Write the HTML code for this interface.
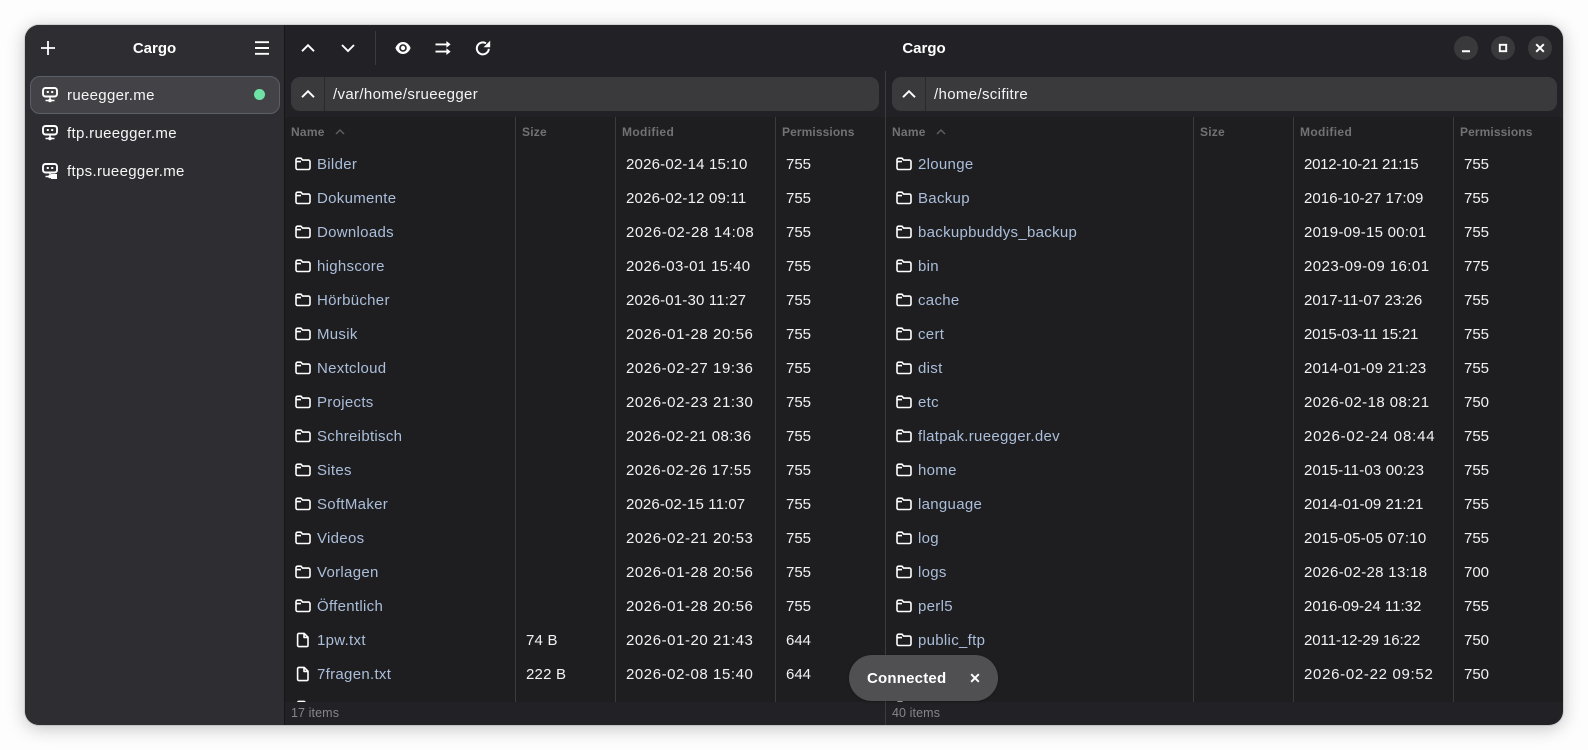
<!DOCTYPE html>
<html><head><meta charset="utf-8"><title>Cargo</title>
<style>
html,body{margin:0;padding:0;width:1588px;height:750px;background:#fdfdfd;overflow:hidden}
body{font-family:"Liberation Sans",sans-serif;font-size:15px;color:#fff}
#w{position:absolute;left:25px;top:25px;width:1538px;height:700px;border-radius:14px;overflow:hidden;background:#222226;box-shadow:0 3px 18px rgba(0,0,0,.24),0 0 0 1px rgba(0,0,0,.1)}
.a{position:absolute}
#side{left:0;top:0;width:259px;height:700px;background:#2e2e32}
.t{font-weight:bold;font-size:15px;line-height:20px;text-align:center}
.it{position:absolute;left:42px;line-height:20px;letter-spacing:.32px;color:#f6f6f7}
.pb{position:absolute;top:52px;height:34px;background:#3a3a3d;border-radius:9px;}
.pb i{position:absolute;left:33px;top:0;width:1px;height:34px;background:#29292c}
.pb span{position:absolute;left:42px;top:1px;line-height:33px;letter-spacing:.35px;color:#f4f4f5}
.list{position:absolute;top:92px;height:585px;background:#1e1e20;overflow:hidden}
.sep{position:absolute;top:0;width:1px;height:585px;background:#3b3b3e}
.h{position:absolute;top:7px;font-size:12px;font-weight:bold;line-height:16px;color:#727275}
.r{position:absolute;left:0;width:100%;height:34px;line-height:34px}
.r span{position:absolute;top:1px;white-space:nowrap}
.r svg{position:absolute;top:9px}
.n{color:#abbeda;letter-spacing:.3px}
.s{color:#f2f2f3;letter-spacing:.2px}
.d{color:#f2f2f3}
.p{color:#f2f2f3}
#L .r span.n{left:32px}#L .r span.s{left:241px}#L .r span.d{left:341px}#L .r span.p{left:501px}
#L .r svg{left:10px}
#R .r span.n{left:32px}#R .r span.s{left:311px}#R .r span.d{left:418px}#R .r span.p{left:578px}
#R .r svg{left:10px}
.ft{position:absolute;top:677px;height:23px;font-size:12.5px;line-height:23px;color:#86868a;letter-spacing:.1px}
.wb{position:absolute;top:11px;width:24px;height:24px;border-radius:50%;background:#39393c}
</style></head>
<body>
<svg width="0" height="0" style="position:absolute"><defs>
<symbol id="fo" viewBox="0 0 16 16"><path d="M2.6 2.2H6l1.6 1.9h5.8c.9 0 1.6.7 1.6 1.6v6.2c0 .9-.7 1.6-1.6 1.6H2.6c-.9 0-1.6-.7-1.6-1.6V3.8c0-.9.7-1.6 1.6-1.6zM1 5.6h5" fill="none" stroke="#fff" stroke-width="1.6" stroke-linejoin="round"/></symbol>
<symbol id="fi" viewBox="0 0 16 16"><path d="M4 1.4h5.2L13 5.2v8c0 .8-.6 1.4-1.4 1.4H4c-.8 0-1.4-.6-1.4-1.4V2.8C2.6 2 3.2 1.4 4 1.4zM9 1.6v3.8h3.8" fill="none" stroke="#fff" stroke-width="1.6" stroke-linejoin="round"/></symbol>
<symbol id="sv" viewBox="0 0 16 16"><path d="M3.6 1H12.4C14 1 15 2 15 3.6V6.9C15 8.5 14 9.5 12.4 9.5H3.6C2 9.5 1 8.5 1 6.9V3.6C1 2 2 1 3.6 1Z" fill="none" stroke="#fff" stroke-width="1.9"/><path d="M4.8 4h2v2h-2zM9.2 4h2v2h-2z" fill="#fff"/><path d="M8 9.5v3M3.5 13.5h9" stroke="#fff" stroke-width="1.4"/><circle cx="8" cy="13.5" r="1.8" fill="#fff"/></symbol>
</defs></svg>
<div id="w">
<div id="side" class="a">
<svg class="a" style="left:15px;top:15px" width="16" height="16"><path d="M8 1v14M1 8h14" stroke="#fff" stroke-width="1.8"/></svg>
<div class="a t" style="left:0;width:259px;top:14px">Cargo</div>
<svg class="a" style="left:229px;top:15px" width="16" height="16"><path d="M1 2.2h14M1 8h14M1 13.8h14" stroke="#fff" stroke-width="1.9"/></svg>
<div class="a" style="left:5px;top:51px;width:248px;height:36px;background:#434347;border:1px solid #5b5f69;border-radius:10px"></div>
<svg class="a" style="left:17px;top:62px" width="16" height="16"><use href="#sv"/></svg>
<div class="it" style="top:61px">rueegger.me</div>
<div class="a" style="left:229px;top:64px;width:11px;height:11px;border-radius:50%;background:#6fe3a5"></div>
<svg class="a" style="left:17px;top:100px" width="16" height="16"><use href="#sv"/></svg>
<div class="it" style="top:99px">ftp.rueegger.me</div>
<svg class="a" style="left:17px;top:138px" width="16" height="16"><use href="#sv"/><rect x="9" y="11" width="6" height="5" fill="#fff"/></svg>
<div class="it" style="top:137px">ftps.rueegger.me</div>
</div>
<div class="a" style="left:259px;top:0;width:1px;height:700px;background:#161618"></div>

<svg class="a" style="left:275px;top:15px" width="16" height="16"><path d="M2 11.2 8 5.2l6 6" fill="none" stroke="#fff" stroke-width="1.9"/></svg>
<svg class="a" style="left:315px;top:15px" width="16" height="16"><path d="M2 5 8 11l6-6" fill="none" stroke="#fff" stroke-width="1.9"/></svg>
<div class="a" style="left:350px;top:6px;width:1px;height:34px;background:#3b3b3e"></div>
<svg class="a" style="left:370px;top:15px" width="16" height="16"><path d="M8 2C4 2 1.400 5.300.4 8c1 2.700 3.600 6 7.600 6s6.600-3.300 7.600-6C14.600 5.300 12 2 8 2z" fill="#fff"/><circle cx="8" cy="8" r="3.800" fill="#222226"/><circle cx="8" cy="8" r="2.200" fill="#fff"/></svg>
<svg class="a" style="left:410px;top:15px" width="16" height="16"><path d="M.5 4.400h13M.5 11.600h13" stroke="#fff" stroke-width="1.900"/><path d="M11.400 1 15.600 4.400 11.400 7.800zM11.400 8.200l4.200 3.400-4.200 3.400z" fill="#fff"/></svg>
<svg class="a" style="left:450px;top:15px" width="16" height="16"><path d="M13.800 8.800A6 6 0 1 1 11 3.300" fill="none" stroke="#fff" stroke-width="2"/><path d="M15.200.6v6.600H8.600z" fill="#fff"/></svg>
<div class="a t" style="left:260px;width:1278px;top:14px">Cargo</div>
<div class="wb" style="left:1429px"><svg class="a" style="left:4px;top:4px" width="16" height="16"><path d="M4 11.200h8" stroke="#fff" stroke-width="2"/></svg></div>
<div class="wb" style="left:1466px"><svg class="a" style="left:4px;top:4px" width="16" height="16"><rect x="4.800" y="4.800" width="6.400" height="6.400" fill="none" stroke="#fff" stroke-width="1.900"/></svg></div>
<div class="wb" style="left:1503px"><svg class="a" style="left:4px;top:4px" width="16" height="16"><path d="M4.200 4.200l7.600 7.600M11.800 4.200l-7.600 7.600" stroke="#fff" stroke-width="2"/></svg></div>

<div class="pb" style="left:266px;width:588px"><svg class="a" style="left:9px;top:9px" width="16" height="16"><path d="M2 11.200 8 5.200l6 6" fill="none" stroke="#fff" stroke-width="1.900"/></svg><i></i><span>/var/home/srueegger</span></div>
<div class="pb" style="left:867px;width:665px"><svg class="a" style="left:9px;top:9px" width="16" height="16"><path d="M2 11.200 8 5.200l6 6" fill="none" stroke="#fff" stroke-width="1.900"/></svg><i></i><span>/home/scifitre</span></div>

<div id="L" class="list" style="left:260px;width:600px">
<div class="sep" style="left:230px"></div><div class="sep" style="left:330px"></div><div class="sep" style="left:490px"></div>
<div class="h" style="left:6px;letter-spacing:.25px">Name</div>
<svg class="a" style="left:50px;top:10px" width="10" height="10"><path d="M1 7 5 3l4 4" fill="none" stroke="#5d5d60" stroke-width="1.500"/></svg>
<div class="h" style="left:237px;letter-spacing:.2px">Size</div><div class="h" style="left:337px;letter-spacing:.35px">Modified</div><div class="h" style="left:497px;letter-spacing:.1px">Permissions</div>
<div class="r" style="top:30px"><svg width="16" height="16"><use href="#fo"/></svg><span class="n">Bilder</span><span class="d" style="letter-spacing:.19px">2026-02-14 15:10</span><span class="p">755</span></div>
<div class="r" style="top:64px"><svg width="16" height="16"><use href="#fo"/></svg><span class="n">Dokumente</span><span class="d" style="letter-spacing:.19px">2026-02-12 09:11</span><span class="p">755</span></div>
<div class="r" style="top:98px"><svg width="16" height="16"><use href="#fo"/></svg><span class="n">Downloads</span><span class="d" style="letter-spacing:.62px">2026-02-28 14:08</span><span class="p">755</span></div>
<div class="r" style="top:132px"><svg width="16" height="16"><use href="#fo"/></svg><span class="n">highscore</span><span class="d" style="letter-spacing:.38px">2026-03-01 15:40</span><span class="p">755</span></div>
<div class="r" style="top:166px"><svg width="16" height="16"><use href="#fo"/></svg><span class="n">Hörbücher</span><span class="d" style="letter-spacing:.18px">2026-01-30 11:27</span><span class="p">755</span></div>
<div class="r" style="top:200px"><svg width="16" height="16"><use href="#fo"/></svg><span class="n">Musik</span><span class="d" style="letter-spacing:.56px">2026-01-28 20:56</span><span class="p">755</span></div>
<div class="r" style="top:234px"><svg width="16" height="16"><use href="#fo"/></svg><span class="n">Nextcloud</span><span class="d" style="letter-spacing:.56px">2026-02-27 19:36</span><span class="p">755</span></div>
<div class="r" style="top:268px"><svg width="16" height="16"><use href="#fo"/></svg><span class="n">Projects</span><span class="d" style="letter-spacing:.56px">2026-02-23 21:30</span><span class="p">755</span></div>
<div class="r" style="top:302px"><svg width="16" height="16"><use href="#fo"/></svg><span class="n">Schreibtisch</span><span class="d" style="letter-spacing:.44px">2026-02-21 08:36</span><span class="p">755</span></div>
<div class="r" style="top:336px"><svg width="16" height="16"><use href="#fo"/></svg><span class="n">Sites</span><span class="d" style="letter-spacing:.44px">2026-02-26 17:55</span><span class="p">755</span></div>
<div class="r" style="top:370px"><svg width="16" height="16"><use href="#fo"/></svg><span class="n">SoftMaker</span><span class="d" style="letter-spacing:.12px">2026-02-15 11:07</span><span class="p">755</span></div>
<div class="r" style="top:404px"><svg width="16" height="16"><use href="#fo"/></svg><span class="n">Videos</span><span class="d" style="letter-spacing:.56px">2026-02-21 20:53</span><span class="p">755</span></div>
<div class="r" style="top:438px"><svg width="16" height="16"><use href="#fo"/></svg><span class="n">Vorlagen</span><span class="d" style="letter-spacing:.56px">2026-01-28 20:56</span><span class="p">755</span></div>
<div class="r" style="top:472px"><svg width="16" height="16"><use href="#fo"/></svg><span class="n">Öffentlich</span><span class="d" style="letter-spacing:.56px">2026-01-28 20:56</span><span class="p">755</span></div>
<div class="r" style="top:506px"><svg width="16" height="16"><use href="#fi"/></svg><span class="n">1pw.txt</span><span class="s">74 B</span><span class="d" style="letter-spacing:.56px">2026-01-20 21:43</span><span class="p">644</span></div>
<div class="r" style="top:540px"><svg width="16" height="16"><use href="#fi"/></svg><span class="n">7fragen.txt</span><span class="s">222 B</span><span class="d" style="letter-spacing:.56px">2026-02-08 15:40</span><span class="p">644</span></div>
<div class="r" style="top:574px"><svg width="16" height="16"><use href="#fi"/></svg></div>
</div>

<div id="R" class="list" style="left:861px;width:677px">
<div class="sep" style="left:307px"></div><div class="sep" style="left:407px"></div><div class="sep" style="left:567px"></div>
<div class="h" style="left:6px;letter-spacing:.25px">Name</div>
<svg class="a" style="left:50px;top:10px" width="10" height="10"><path d="M1 7 5 3l4 4" fill="none" stroke="#5d5d60" stroke-width="1.500"/></svg>
<div class="h" style="left:314px;letter-spacing:.2px">Size</div><div class="h" style="left:414px;letter-spacing:.35px">Modified</div><div class="h" style="left:574px;letter-spacing:.1px">Permissions</div>
<div class="r" style="top:30px"><svg width="16" height="16"><use href="#fo"/></svg><span class="n">2lounge</span><span class="d" style="letter-spacing:-.26px">2012-10-21 21:15</span><span class="p">755</span></div>
<div class="r" style="top:64px"><svg width="16" height="16"><use href="#fo"/></svg><span class="n">Backup</span><span class="d" style="letter-spacing:.06px">2016-10-27 17:09</span><span class="p">755</span></div>
<div class="r" style="top:98px"><svg width="16" height="16"><use href="#fo"/></svg><span class="n">backupbuddys_backup</span><span class="d" style="letter-spacing:.25px">2019-09-15 00:01</span><span class="p">755</span></div>
<div class="r" style="top:132px"><svg width="16" height="16"><use href="#fo"/></svg><span class="n">bin</span><span class="d" style="letter-spacing:.44px">2023-09-09 16:01</span><span class="p">775</span></div>
<div class="r" style="top:166px"><svg width="16" height="16"><use href="#fo"/></svg><span class="n">cache</span><span class="d" style="letter-spacing:.06px">2017-11-07 23:26</span><span class="p">755</span></div>
<div class="r" style="top:200px"><svg width="16" height="16"><use href="#fo"/></svg><span class="n">cert</span><span class="d" style="letter-spacing:-.2px">2015-03-11 15:21</span><span class="p">755</span></div>
<div class="r" style="top:234px"><svg width="16" height="16"><use href="#fo"/></svg><span class="n">dist</span><span class="d" style="letter-spacing:.25px">2014-01-09 21:23</span><span class="p">755</span></div>
<div class="r" style="top:268px"><svg width="16" height="16"><use href="#fo"/></svg><span class="n">etc</span><span class="d" style="letter-spacing:.44px">2026-02-18 08:21</span><span class="p">750</span></div>
<div class="r" style="top:302px"><svg width="16" height="16"><use href="#fo"/></svg><span class="n">flatpak.rueegger.dev</span><span class="d" style="letter-spacing:.81px">2026-02-24 08:44</span><span class="p">755</span></div>
<div class="r" style="top:336px"><svg width="16" height="16"><use href="#fo"/></svg><span class="n">home</span><span class="d" style="letter-spacing:.18px">2015-11-03 00:23</span><span class="p">755</span></div>
<div class="r" style="top:370px"><svg width="16" height="16"><use href="#fo"/></svg><span class="n">language</span><span class="d" style="letter-spacing:.06px">2014-01-09 21:21</span><span class="p">755</span></div>
<div class="r" style="top:404px"><svg width="16" height="16"><use href="#fo"/></svg><span class="n">log</span><span class="d" style="letter-spacing:.25px">2015-05-05 07:10</span><span class="p">755</span></div>
<div class="r" style="top:438px"><svg width="16" height="16"><use href="#fo"/></svg><span class="n">logs</span><span class="d" style="letter-spacing:.31px">2026-02-28 13:18</span><span class="p">700</span></div>
<div class="r" style="top:472px"><svg width="16" height="16"><use href="#fo"/></svg><span class="n">perl5</span><span class="d" style="letter-spacing:0">2016-09-24 11:32</span><span class="p">755</span></div>
<div class="r" style="top:506px"><svg width="16" height="16"><use href="#fo"/></svg><span class="n">public_ftp</span><span class="d" style="letter-spacing:-.07px">2011-12-29 16:22</span><span class="p">750</span></div>
<div class="r" style="top:540px"><svg width="16" height="16"><use href="#fo"/></svg><span class="n" style="letter-spacing:.2px">public_html</span><span class="d" style="letter-spacing:.69px">2026-02-22 09:52</span><span class="p">750</span></div>
<div class="r" style="top:574px"><svg width="16" height="16"><use href="#fo"/></svg></div>
</div>

<div class="a" style="left:860px;top:46px;width:1px;height:654px;background:#3b3b3e"></div>
<div class="ft" style="left:266px">17 items</div>
<div class="ft" style="left:867px">40 items</div>

<div class="a" style="left:824px;top:630px;width:149px;height:46px;border-radius:23px;background:#505052;box-shadow:0 1px 3px rgba(0,0,0,.2)">
<div class="a" style="left:18px;top:1px;line-height:46px;font-weight:bold;letter-spacing:.2px;white-space:nowrap">Connected</div>
<svg class="a" style="left:118px;top:15px" width="16" height="16"><path d="M4.200 4.200l7.600 7.600M11.800 4.200l-7.600 7.600" stroke="#fff" stroke-width="2"/></svg>
</div>
</div>
</body></html>
